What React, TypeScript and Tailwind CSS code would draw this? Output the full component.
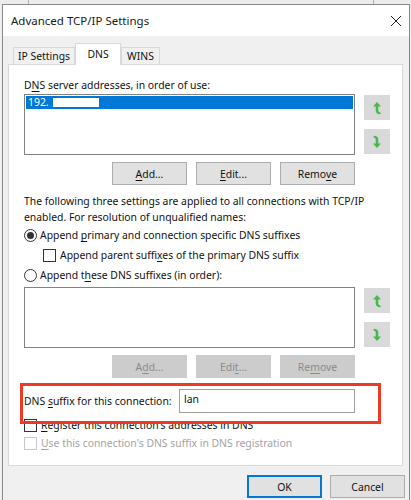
import React from "react";

const font = { fontFamily: '"Noto Sans", "Liberation Sans", sans-serif' };

function U({ children }: { children: React.ReactNode }) {
  return <span className="underline underline-offset-2">{children}</span>;
}

function ArrowUp() {
  return (
    <svg width="10" height="14" viewBox="0 0 10 14">
      <path d="M5 1 L9 5.5 L6.3 5.5 L6.3 9.5 Q6.3 11.5 8.5 11.5 L8.5 13.2 Q3.7 13.2 3.7 9.5 L3.7 5.5 L1 5.5 Z" fill="#46b94f" />
    </svg>
  );
}

function ArrowDown() {
  return (
    <svg width="10" height="14" viewBox="0 0 10 14">
      <path d="M5 13 L9 8.5 L6.3 8.5 L6.3 4.5 Q6.3 0.8 1.5 0.8 L1.5 2.5 Q3.7 2.5 3.7 4.5 L3.7 8.5 L1 8.5 Z" fill="#46b94f" />
    </svg>
  );
}

function SideButtons() {
  return (
    <div className="flex flex-col gap-[9px] ml-[9px] pt-px">
      <div className="w-[26px] h-[25px] bg-[#d9d9d9] flex items-center justify-center">
        <ArrowUp />
      </div>
      <div className="w-[26px] h-[25px] bg-[#d9d9d9] flex items-center justify-center">
        <ArrowDown />
      </div>
    </div>
  );
}

function Btn({ children, disabled, primary }: { children: React.ReactNode; disabled?: boolean; primary?: boolean }) {
  return (
    <div
      className={
        "w-[75px] h-[23px] flex items-center justify-center border " +
        (disabled
          ? "bg-[#cccccc] border-[#cccccc] text-[#8a8a8a]"
          : primary
          ? "bg-[#e1e1e1] border-[#0078d7] border-2 text-[#111]"
          : "bg-[#e1e1e1] border-[#adadad] text-[#111]")
      }
    >
      {children}
    </div>
  );
}

export default function App() {
  return (
    <div className="w-[411px] h-[500px] bg-[#f0f0f0] overflow-hidden text-[10.4px] text-[#111] leading-[16px] whitespace-nowrap" style={font}>
      {/* background window strip */}
      <div className="h-[4px] flex bg-[#ececec]">
        <div className="w-[28px]" />
        <div className="w-px bg-[#b0b0b0]" />
        <div className="w-[344px]" />
        <div className="w-px bg-[#b0b0b0]" />
      </div>
      <div className="ml-[2px] w-[408px] h-[496px] border border-b-0 border-[#8a8a8a] bg-[#f0f0f0] flex flex-col">
        {/* title bar */}
        <div className="h-[31px] bg-white flex items-center justify-between pl-[8px] pr-[7px] shrink-0">
          <span className="text-[11.5px] text-[#1a1a1a]">Advanced TCP/IP Settings</span>
          <svg width="12" height="12" viewBox="0 0 12 12">
            <path d="M1 1 L11 11 M11 1 L1 11" stroke="#222" strokeWidth="1" />
          </svg>
        </div>
        {/* tabs */}
        <div className="pt-[7px]">
          <div className="flex items-end ml-[10px] h-[21px] relative z-10">
            <div className="w-[62px] h-[17px] border border-b-0 border-[#d9d9d9] bg-[#f0f0f0] flex items-center justify-center">
              IP Settings
            </div>
            <div className="w-[46px] h-[22px] -mb-px border border-b-0 border-[#d9d9d9] bg-white flex items-start justify-center pt-[2px]">
              DNS
            </div>
            <div className="w-[39px] h-[17px] border border-b-0 border-[#d9d9d9] bg-[#f0f0f0] flex items-center justify-center">
              WINS
            </div>
          </div>
          {/* panel */}
          <div className="ml-[5px] w-[395px] h-[402px] border border-[#d9d9d9] bg-white pl-[15px] flex flex-col">
            <div className="mt-[12px] h-[16px]">
              D<U>N</U>S server addresses, in order of use:
            </div>
            <div className="flex mt-px">
              <div className="w-[331px] h-[61px] border border-[#828282] bg-white p-px">
                <div className="h-[13px] bg-[#0078d7] flex items-center text-white pl-[2px]">
                  <span className="leading-[13px]">192.</span>
                  <div className="ml-[4px] w-[46px] h-[9px] bg-white" />
                </div>
              </div>
              <SideButtons />
            </div>
            <div className="flex justify-end gap-[9px] w-[331px] mt-[7px]">
              <Btn>
                <U>A</U>dd...
              </Btn>
              <Btn>
                <U>E</U>dit...
              </Btn>
              <Btn>
                Remo<U>v</U>e
              </Btn>
            </div>
            <div className="mt-[8px]">
              The following three settings are applied to all connections with TCP/IP
              <br />
              enabled. For resolution of unqualified names:
            </div>
            <div className="h-[20px] flex items-center">
              <div className="w-[13px] h-[13px] rounded-full border border-[#333] flex items-center justify-center bg-white">
                <div className="w-[7px] h-[7px] rounded-full bg-[#333]" />
              </div>
              <span className="ml-[3px]">
                Append <U>p</U>rimary and connection specific DNS suffixes
              </span>
            </div>
            <div className="h-[20px] flex items-center pl-[19px]">
              <div className="w-[13px] h-[13px] border border-[#333] bg-white" />
              <span className="ml-[4px]">
                Append parent suffi<U>x</U>es of the primary DNS suffix
              </span>
            </div>
            <div className="h-[20px] flex items-center">
              <div className="w-[13px] h-[13px] rounded-full border border-[#333] bg-white" />
              <span className="ml-[3px]">
                Append t<U>h</U>ese DNS suffixes (in order):
              </span>
            </div>
            <div className="flex mt-[2px]">
              <div className="w-[331px] h-[61px] border border-[#828282] bg-white" />
              <SideButtons />
            </div>
            <div className="flex justify-end gap-[9px] w-[331px] mt-[7px]">
              <Btn disabled>
                A<U>d</U>d...
              </Btn>
              <Btn disabled>
                Edi<U>t</U>...
              </Btn>
              <Btn disabled>
                Re<U>m</U>ove
              </Btn>
            </div>
            <div className="relative mt-[11px]">
              <div className="flex items-center h-[24px]">
                <span className="w-[155px]">
                  DNS <U>s</U>uffix for this connection:
                </span>
                <div className="w-[176px] h-[24px] border border-[#a0a0a0] bg-white pl-[4px] flex items-start leading-[18px]">
                  lan
                </div>
              </div>
              <div className="h-[18px] flex items-center mt-[3px]">
                <div className="w-[13px] h-[13px] border border-[#333] bg-white" />
                <span className="ml-[4px]">
                  <U>R</U>egister this connection's addresses in DNS
                </span>
              </div>
              <div className="h-[18px] flex items-center text-[#a3a3a3]">
                <div className="w-[13px] h-[13px] border border-[#c8c8c8] bg-white" />
                <span className="ml-[4px]">
                  <U>U</U>se this connection's DNS suffix in DNS registration
                </span>
              </div>
              {/* red annotation box */}
              <div className="absolute left-[-4px] top-[-6px] w-[361px] h-[41px] border-[3px] border-[#ee3a24]" />
            </div>
          </div>
          {/* bottom buttons */}
          <div className="flex justify-end gap-[8px] pr-[4px] mt-[9px]">
            <Btn primary>OK</Btn>
            <Btn>Cancel</Btn>
          </div>
        </div>
      </div>
    </div>
  );
}
